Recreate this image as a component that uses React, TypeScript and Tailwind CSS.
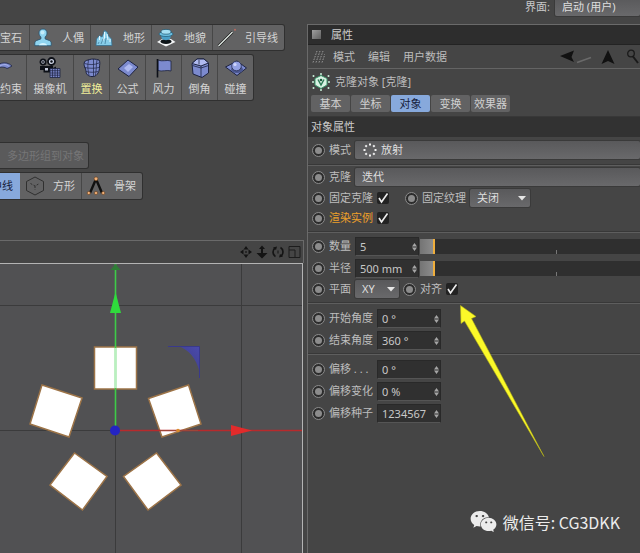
import { useState, type ReactNode } from "react";
import { FaWeixin } from "react-icons/fa";
import clsx from "clsx";

const ink = "#1d2340";
const fill = "#7c8ace";

function FigureIcon() {
  return (
    <svg width="18" height="20" viewBox="0 0 18 20" fill="#8fd4f0" stroke="#24506e" strokeWidth="0.8">
      <path d="M9 1c2.600 0 4 1.700 4 4 0 1.800-.8 3.100-1.900 3.900v2l4.700 1.800c1.400.7 1.700 2.700 1.300 5H.9c-.4-2.300-.1-4.300 1.300-5l4.700-1.800v-2C5.800 8.100 5 6.800 5 5c0-2.300 1.400-4 4-4z" />
      <path d="M5 17.300c1-3 7-3 8 0z" fill="#d4f4ff" stroke="none" />
      <circle cx="8.500" cy="4.500" r="2" fill="#c3ebfa" stroke="none" />
    </svg>
  );
}

function TerrainIcon() {
  return (
    <svg width="18" height="20" viewBox="0 0 18 20">
      <path d="M1 17.500 1.500 11l3-3.500L7 9l2.500-6.500L12 4l2 4.500 2.500 2.500.5 6.500z" fill="#86cdea" stroke="#356f8f" strokeWidth="0.8" />
      <path d="M4.500 8v4M9.500 4v6l-2 3M12 6l1 6M15 11v3" stroke="#e4f7ff" fill="none" />
      <path d="m6 16 2-5M10 16l1-6M3 16l1-2" stroke="#437f9e" fill="none" strokeWidth="0.8" />
    </svg>
  );
}

function LandscapeIcon() {
  return (
    <svg width="20" height="20" viewBox="0 0 20 20">
      <path d="M1 14 6 11h9l4.500 3L10 18.500z" fill="#f3f5f6" />
      <ellipse cx="10" cy="13.500" rx="5.500" ry="2.600" fill="#0d1418" />
      <path d="M4.500 6h11l-1.500 5c-2 1.500-6 1.500-8 0z" fill="#4b9fc7" />
      <ellipse cx="10" cy="6" rx="7" ry="2.500" fill="#6dbfe0" stroke="#1f5773" strokeWidth="0.7" />
      <ellipse cx="10" cy="3.800" rx="5" ry="2.400" fill="#a5dff3" stroke="#1f5773" strokeWidth="0.7" />
    </svg>
  );
}

function GuideIcon() {
  return (
    <svg width="20" height="20" viewBox="0 0 20 20">
      <path d="m1.500 18 14-14" stroke="#1c1c1c" strokeWidth="2.600" />
      <path d="m1.500 18 14-14" stroke="#e4ece8" strokeWidth="1.200" />
      <circle cx="18" cy="1.800" r="1" fill="#b96a5f" />
    </svg>
  );
}

function ConstraintIcon() {
  return (
    <svg width="22" height="22" viewBox="0 0 22 22">
      <path d="M-8 14c4-8 14-11 20-5-2 1-3 2-5 2.500C4 9-4 10-8 14z" fill={fill} stroke={ink} strokeWidth="0.8" />
      <path d="M0 9c3-2 7-2 9 .5" stroke="#aab5ee" fill="none" />
    </svg>
  );
}

function CameraIcon() {
  return (
    <svg width="24" height="22" viewBox="0 0 24 22">
      <g fill="#c9cfe0" stroke="#0d1017" strokeWidth="1.800">
        <circle cx="5" cy="5" r="2.600" />
        <circle cx="13.500" cy="4.500" r="3.500" />
      </g>
      <circle cx="5" cy="5" r="0.900" fill="#0d1017" />
      <circle cx="13.500" cy="4.500" r="1.200" fill="#0d1017" />
      <path d="M2 9h13v6.500H5.500V13H2zM15 11l3-1.500v4L15 12.500z" fill="#0d1017" />
      <path d="M7 11h3v2.500H7z" fill="#c5cadb" />
      <path d="M12 11.500h10v9H12z" fill="#7a86c8" stroke={ink} strokeWidth="0.800" />
      <path d="M14.500 11.500v9M17 11.500v9M19.500 11.500v9M12 13.700h10M12 16h10M12 18.200h10" stroke={ink} strokeWidth="0.700" />
    </svg>
  );
}

function DisplaceIcon() {
  return (
    <svg width="22" height="22" viewBox="0 0 22 22" stroke={ink}>
      <path d="M3.500 5c1-2 3-1.500 5-2.500 3-.8 6-.5 9.500.5 1.500 2 .5 5 .5 7 0 4-2 9-6 9.500S5 18 5 14.500 2 9 3.500 5z" fill={fill} />
      <path d="M8 2.500c-2 5-1 11 0 16M12.500 2v17.500M16 3c-1 5-.5 10-1.500 15M3.500 6.500c5 1.500 10 1.500 14.500-.5M3.500 10.500c5 1 10 1 14.500 0M5 14.500c4 1 8 1 12 0" fill="none" strokeWidth="0.700" />
    </svg>
  );
}

function FormulaIcon() {
  return (
    <svg width="22" height="22" viewBox="0 0 22 22">
      <path d="M1 12 11 3l10 7-9 9.500z" fill={fill} stroke={ink} />
      <path d="m7 11 5-4 4 3-5 5z" fill="#aeb9f0" />
    </svg>
  );
}

function WindIcon() {
  return (
    <svg width="22" height="22" viewBox="0 0 22 22">
      <path d="M5 3c4 2 9-.5 13 1v10c-4-1.500-9 1-13-.5z" fill={fill} stroke={ink} strokeWidth="0.800" />
      <path d="M4.500 2v18.500" stroke="#0d1017" strokeWidth="1.600" />
    </svg>
  );
}

function BevelIcon() {
  return (
    <svg width="22" height="22" viewBox="0 0 22 22" stroke={ink} strokeLinejoin="round">
      <path d="M3 6.500 8 2h7l4.500 4V16L13 20.500 4 17z" fill={fill} />
      <path d="M3 6.500 8 2h7l4.500 4L12 9z" fill="#b0baf0" />
      <path d="M12 9v11M3.500 8.500 12 11l7.500-2.500M10 3v4.500" fill="none" strokeWidth="0.800" />
    </svg>
  );
}

function CollideIcon() {
  return (
    <svg width="22" height="22" viewBox="0 0 22 22">
      <path d="M.5 10 12 4l9.500 7L12 18.500z" fill={fill} stroke={ink} />
      <ellipse cx="12" cy="12.500" rx="6" ry="3.500" fill="#4a568f" />
      <circle cx="11.500" cy="9" r="4.800" fill="#93a1e4" stroke={ink} strokeWidth="0.700" />
      <circle cx="10" cy="7.500" r="1.600" fill="#cfd6fb" />
    </svg>
  );
}

function HexIcon() {
  return (
    <svg width="20" height="20" viewBox="0 0 20 20" fill="none" stroke="#303030">
      <path d="m10 1 8.500 4.500v9L10 19l-8.500-4.500v-9z" />
      <path d="m5.500 7.500 4.500 2.500 4.500-2.500M10 10v4" strokeDasharray="2 1.500" />
    </svg>
  );
}

function BoneIcon() {
  return (
    <svg width="20" height="20" viewBox="0 0 20 20">
      <path d="M10 3 4 17M10 3l6 14" stroke="#101010" strokeWidth="2.400" />
      <g fill="#f0b078" stroke="#6b3f1c" strokeWidth="0.600">
        <circle cx="10" cy="2.800" r="1.900" />
        <circle cx="2.800" cy="17" r="1.600" />
        <circle cx="10" cy="17" r="1.600" />
        <circle cx="17.200" cy="17" r="1.600" />
      </g>
    </svg>
  );
}

function ClonerIcon() {
  return (
    <svg width="18" height="18" viewBox="0 0 18 18">
      <path d="m9 2.500 6 3v6.500L9 15.500 3 12V5.500z" fill="#d9f3e4" stroke="#3c9a6c" />
      <path d="M6 6.500 9 12l3-5.500" fill="none" stroke="#2c7a55" strokeWidth="1.500" />
      <circle cx="9" cy="7" r="1.300" fill="#1f5a3e" />
      <g fill="#c9f0da">
        <circle cx="9" cy="1" r="1" />
        <circle cx="16.500" cy="3" r="1" />
        <circle cx="1.500" cy="3" r="1" />
        <circle cx="1" cy="9" r="1" />
        <circle cx="17" cy="9" r="1" />
        <circle cx="1.500" cy="15" r="1" />
        <circle cx="16.500" cy="15" r="1" />
        <circle cx="9" cy="17" r="1" />
      </g>
    </svg>
  );
}

function RadialIcon() {
  return (
    <svg width="14" height="14" viewBox="0 0 14 14" fill="#f2f2f2">
      {[0, 45, 90, 135, 180, 225, 270, 315].map((angle) => (
        <rect key={angle} x="6" y="0.500" width="2" height="2" transform={`rotate(${angle} 7 7)`} />
      ))}
    </svg>
  );
}

function ViewportIcons() {
  return (
    <svg width="62" height="14" viewBox="0 0 62 14" fill="#141414">
      <path d="m7 1 2.500 3.500h-5zM7 13l2.500-3.500h-5zM1 7l3.500-2.500v5zM13 7 9.500 4.500v5zM6.200 6.200h1.600v1.600H6.200z" />
      <path d="m23 .5 3 3.500h-2v4h4.500L23 13.500 17.500 8H22V4h-2z" />
      <path d="M36.500 11.500a5.200 5.200 0 0 1-.5-8.500M41.500 2.500a5.200 5.200 0 0 1 .5 8.500" fill="none" stroke="#141414" strokeWidth="1.600" />
      <path d="m34 2.500 4-1-1 3.500zM44 11.500l-4 1 1-3.500zM38.500 5.500h1v3h-1z" />
      <path d="M50 1.500h11v11H50zM50 5h6v7.500" fill="none" stroke="#1d1d1d" />
    </svg>
  );
}

function Scene() {
  return (
    <svg className="absolute left-0 top-0" width="302" height="289" viewBox="0 264 302 289">
      <defs>
        <linearGradient id="plane" x1="1" y1="0" x2="0.300" y2="0.800">
          <stop offset="0" stopColor="#4a4aae" />
          <stop offset="1" stopColor="#40408a" />
        </linearGradient>
      </defs>
      <path d="M0 305.500h302M0 430.500h302M115.500 264v289M241.500 264v289" stroke="#3b3b3c" />
      <path d="M178 346h21v24c-3-11-9-20-21-24z" fill="url(#plane)" />
      <path d="M168 346.500h31.500V378" fill="none" stroke="#39398c" />
      <g fill="#ffffff" stroke="#9d7448" strokeWidth="1.500">
        <path d="M94.500 347h42v42h-42z" />
        <path d="m42 385 40 13-13 39-39-13z" />
        <path d="m148.500 398.500 40-13.500 12.500 39-39 13z" />
        <path d="m74.500 453 32.500 23.500-24.500 33.500-32.500-25z" />
        <path d="m156.500 453 24.500 32-33 25-24.500-33.500z" />
      </g>
      <path d="M115 430.500h187" stroke="#b82a2c" strokeWidth="1.400" />
      <path d="M160 430.500h38" stroke="#a04538" />
      <circle cx="178" cy="430.500" r="1.800" fill="#d98b2c" />
      <path d="M231 425v11l21-5.500z" fill="#e22b2b" />
      <path d="M115.500 264v166" stroke="#3ecb48" strokeWidth="1.600" />
      <path d="M115.500 348v40" stroke="#b9f0c0" strokeWidth="1.600" />
      <path d="m115.500 264-5 6h10z" fill="#2f7d36" />
      <path d="m115.500 292-5.500 21h11z" fill="#2fdc3c" />
      <circle cx="115" cy="430.500" r="5" fill="#2424c4" />
    </svg>
  );
}

const objectTools = [
  { label: "人偶", icon: <FigureIcon /> },
  { label: "地形", icon: <TerrainIcon /> },
  { label: "地貌", icon: <LandscapeIcon /> },
  { label: "引导线", icon: <GuideIcon /> },
];

const deformers = [
  { label: "置换", icon: <DisplaceIcon />, active: true },
  { label: "公式", icon: <FormulaIcon /> },
  { label: "风力", icon: <WindIcon /> },
  { label: "倒角", icon: <BevelIcon /> },
  { label: "碰撞", icon: <CollideIcon /> },
];

const tabs = ["基本", "坐标", "对象", "变换", "效果器"];

function Dot() {
  return (
    <span className="flex size-[13px] shrink-0 items-center justify-center rounded-full border border-[#8c8c8c] bg-[#2c2c2c]">
      <span className="size-[7px] rounded-full bg-[#8c8c8c]" />
    </span>
  );
}

function Row({ className = "h-[22px]", children }: { className?: string; children: ReactNode }) {
  return <div className={clsx("flex items-center gap-1", className)}>{children}</div>;
}

function Group({ className, children }: { className?: string; children: ReactNode }) {
  return <div className={clsx("border-b border-[#5e5e5e] pl-1 shadow-[0_-1px_0_#383838_inset]", className)}>{children}</div>;
}

function Select({ id, value, className, icon, arrow }: { id: string; value: string; className?: string; icon?: ReactNode; arrow?: boolean }) {
  return (
    <div className={clsx("relative h-[18px]", className)}>
      <select
        id={id}
        defaultValue={value}
        className={clsx(
          "block h-full w-full appearance-none rounded-xs bg-linear-to-b from-[#59595b] to-[#69696b] text-[11px] leading-4 text-[#dedede] shadow-[0_0_0_1px_#3a3a3a] outline-none",
          icon ? "pl-[26px]" : "pl-[7px]"
        )}
      >
        <option>{value}</option>
      </select>
      {icon && <span className="pointer-events-none absolute left-2 top-[2px]">{icon}</span>}
      {arrow && (
        <svg className="pointer-events-none absolute right-1 top-[7px]" width="8" height="5" viewBox="0 0 8 5">
          <path d="M0 0h8L4 4.500z" fill="#e6e6e6" />
        </svg>
      )}
    </div>
  );
}

function NumberField({ id, value }: { id: string; value: string }) {
  return (
    <div className="relative h-[19px] w-16 shrink-0">
      <input
        id={id}
        type="text"
        defaultValue={value}
        className="block h-full w-full border border-[#292929] border-b-[#555555] bg-[#303030] pl-1 text-[11px] leading-4 text-[#c8c8c8] outline-none"
      />
      <svg className="pointer-events-none absolute right-[2px] top-[6px]" width="5" height="8" viewBox="0 0 5 8" fill="#a5a5a5">
        <path d="M0 3.500 2.500 0 5 3.500zM0 4.500h5L2.500 8z" />
      </svg>
    </div>
  );
}

function Slider({ label }: { label: string }) {
  return (
    <div className="relative -ml-[3px] h-[15px] min-w-0 flex-1 bg-[#2f2f2f]">
      <input
        type="range"
        aria-label={label}
        min={0}
        max={100}
        defaultValue={6}
        className="block h-full w-full appearance-none bg-[linear-gradient(90deg,#747474,#8d8d8d)] bg-[length:14px_100%] bg-no-repeat outline-none [&::-webkit-slider-thumb]:h-[15px] [&::-webkit-slider-thumb]:w-[2px] [&::-webkit-slider-thumb]:appearance-none [&::-webkit-slider-thumb]:bg-[#efae3c]"
      />
      <span className="absolute bottom-0 left-[62%] h-1 w-px bg-[#777777]" />
    </div>
  );
}

function Check({ id }: { id: string }) {
  return (
    <span className="relative size-3 shrink-0">
      <input id={id} type="checkbox" defaultChecked className="peer block size-3 appearance-none rounded-xs bg-[#222222]" />
      <svg className="pointer-events-none absolute left-0 top-0 hidden overflow-visible peer-checked:block" width="12" height="12" viewBox="0 0 12 12">
        <path d="m2 6 2.500 4L10.500 1.500" fill="none" stroke="#ececec" strokeWidth="1.600" />
      </svg>
    </span>
  );
}

function Toolbars() {
  return (
    <div className="flex h-[240px] flex-col items-start pt-[25px] text-[#d4d4d4]">
      <div className="flex h-[25px] rounded-r-xs bg-[#626263] shadow-[0_0_0_1px_#303030]">
        <button className="w-[29px] text-left">宝石</button>
        {objectTools.map((tool) => (
          <button key={tool.label} className="flex items-center border-l border-[#474747] pl-1 pr-[6px]">
            <span className="flex w-[28px]">{tool.icon}</span>
            {tool.label}
          </button>
        ))}
      </div>

      <div className="mt-[5px] flex h-[45px] rounded-r-xs bg-[#626263] shadow-[0_0_0_1px_#303030]">
        <button className="flex w-[26px] flex-col items-start gap-[2px] pt-[2px]">
          <ConstraintIcon />
          约束
        </button>
        <button className="flex w-[47px] flex-col items-center gap-[2px] border-l border-[#474747] pt-[2px]">
          <CameraIcon />
          摄像机
        </button>
        {deformers.map((tool) => (
          <button
            key={tool.label}
            className={clsx(
              "flex w-[36px] flex-col items-center gap-[2px] border-l border-[#474747] pt-[2px]",
              tool.active && "text-[#f0ee9a]"
            )}
          >
            {tool.icon}
            {tool.label}
          </button>
        ))}
      </div>

      <button disabled className="mt-[43px] h-[25px] rounded-r-xs bg-[#5a5a5b] pl-[7px] pr-1 text-[#767677] shadow-[0_0_0_1px_#303030]">
        多边形组到对象
      </button>

      <div className="mt-[5px] flex h-[26px] rounded-r-xs bg-[#626263] shadow-[0_0_0_1px_#303030]">
        <button className="-ml-[9px] w-[29px] bg-[#87a9dc] text-left text-[#15203a]">中线</button>
        <button className="flex items-center pl-[5px] pr-[6px]">
          <span className="flex w-[28px]">
            <HexIcon />
          </span>
          方形
        </button>
        <button className="flex items-center border-l border-[#474747] pl-1 pr-[6px]">
          <span className="flex w-[28px]">
            <BoneIcon />
          </span>
          骨架
        </button>
      </div>
    </div>
  );
}

function Attributes() {
  const [tab, setTab] = useState("对象");

  return (
    <section className="flex-1 border-l border-t border-[#6a6a6a] text-[#bdbdbd]">
      <h2 className="flex h-5 items-center gap-[10px] border-b border-[#232323] bg-[#2d2d2d] pl-1 text-[#cccccc]">
        <span className="size-[9px] bg-linear-to-br from-[#a0a0a0] to-[#606060]" />
        属性
      </h2>

      <nav className="flex h-6 items-center border-b border-[#646464] pl-1">
        <svg width="13" height="12" viewBox="0 0 13 12">
          <path d="M1 11.500 5 0M4 11.500 8 0M7 11.500 11 0M10 11.500 13 3" stroke="#9a9a9a" strokeDasharray="1.500 1.200" />
        </svg>
        <button className="ml-2">模式</button>
        <button className="ml-[13px]">编辑</button>
        <button className="ml-[13px]">用户数据</button>
        <svg className="ml-auto" width="80" height="16" viewBox="0 0 80 16">
          <path d="M0 7 14 1.500 11.500 8l2.500 5z" fill="#111111" />
          <path d="m17 13.500 14-5" stroke="#6a6a6a" strokeWidth="1.500" />
          <path d="m48 1 6.500 14-6.500-3-6.500 3z" fill="#111111" />
          <circle cx="71" cy="4.500" r="3.300" fill="none" stroke="#1a1a1a" strokeWidth="1.300" />
          <path d="m73 7.500 5 6.500" stroke="#1a1a1a" strokeWidth="2" />
        </svg>
      </nav>

      <h3 className="flex h-[26px] items-center gap-[5px] pl-1">
        <ClonerIcon />
        克隆对象 [克隆]
      </h3>

      <div role="tablist" className="flex h-[22px] gap-px border-b border-[#383838] pb-1 pl-[3px]">
        {tabs.map((name) => (
          <button
            key={name}
            role="tab"
            aria-selected={tab === name}
            onClick={() => setTab(name)}
            className={clsx(
              "w-[39px] rounded-xs",
              tab === name ? "bg-[#87a9dc] text-[#15203a]" : "bg-[#626263] text-[#d0d0d0]"
            )}
          >
            {name}
          </button>
        ))}
      </div>

      <h3 className="h-5 bg-[#323232] pl-[3px] leading-5 text-[#cccccc]">对象属性</h3>

      <Group className="pb-[2px]">
        <Row className="h-[26px]">
          <Dot />
          <label htmlFor="mode" className="w-[22px]">模式</label>
          <Select id="mode" value="放射" className="flex-1" icon={<RadialIcon />} />
        </Row>
      </Group>

      <Group className="pb-1">
        <Row>
          <Dot />
          <label htmlFor="clones" className="w-[22px]">克隆</label>
          <Select id="clones" value="迭代" className="flex-1" />
        </Row>
        <Row className="h-5">
          <Dot />
          <label htmlFor="fixclone">固定克隆</label>
          <Check id="fixclone" />
          <span className="w-2" />
          <Dot />
          <label htmlFor="fixtexture">固定纹理</label>
          <Select id="fixtexture" value="关闭" className="w-[60px]" arrow />
        </Row>
        <Row className="h-5">
          <Dot />
          <label htmlFor="instances" className="text-[#eda02a]">渲染实例</label>
          <Check id="instances" />
        </Row>
      </Group>

      <Group className="pb-1 pt-[2px]">
        <Row>
          <Dot />
          <label htmlFor="count" className="w-[22px]">数量</label>
          <NumberField id="count" value="5" />
          <Slider label="数量" />
        </Row>
        <Row>
          <Dot />
          <label htmlFor="radius" className="w-[22px]">半径</label>
          <NumberField id="radius" value="500 mm" />
          <Slider label="半径" />
        </Row>
        <Row className="h-5">
          <Dot />
          <label htmlFor="plane-axis" className="w-[22px]">平面</label>
          <Select id="plane-axis" value="XY" className="w-11" arrow />
          <Dot />
          <label htmlFor="align">对齐</label>
          <Check id="align" />
        </Row>
      </Group>

      <Group className="pb-[3px] pt-[3px]">
        <Row>
          <Dot />
          <label htmlFor="start" className="w-11">开始角度</label>
          <NumberField id="start" value="0 °" />
        </Row>
        <Row>
          <Dot />
          <label htmlFor="end" className="w-11">结束角度</label>
          <NumberField id="end" value="360 °" />
        </Row>
      </Group>

      <div className="pl-1 pt-[3px]">
        <Row>
          <Dot />
          <label htmlFor="offset" className="w-11 whitespace-nowrap">偏移 . . .</label>
          <NumberField id="offset" value="0 °" />
        </Row>
        <Row>
          <Dot />
          <label htmlFor="variation" className="w-11">偏移变化</label>
          <NumberField id="variation" value="0 %" />
        </Row>
        <Row>
          <Dot />
          <label htmlFor="seed" className="w-11">偏移种子</label>
          <NumberField id="seed" value="1234567" />
        </Row>
      </div>
    </section>
  );
}

export default function App() {
  return (
    <div className="relative flex min-h-screen overflow-hidden whitespace-nowrap bg-[#454545] font-['Noto_Sans','Noto_Sans_CJK_SC',sans-serif] text-[11px] leading-4">
      <div className="flex w-[304px] shrink-0 flex-col">
        <Toolbars />
        <div className="flex h-[23px] items-center justify-end border-r border-t border-[#6a6a6a] pr-[2px]">
          <ViewportIcons />
        </div>
        <div className="relative mr-px flex-1 overflow-hidden border-r border-t border-[#b4b4b4] bg-[#515153]">
          <Scene />
        </div>
      </div>

      <main className="ml-[3px] flex min-w-0 flex-1 flex-col">
        <div className="flex h-6 items-start justify-end gap-[5px] text-[#c8c8c8]">
          <label htmlFor="layout" className="leading-[14px]">界面:</label>
          <Select id="layout" value="启动 (用户)" className="-mt-[2px] w-[85px]" />
        </div>
        <Attributes />
      </main>

      {/* pointer to the align option */}
      <svg className="pointer-events-none absolute left-[455px] top-[300px]" width="95" height="160" viewBox="455 300 95 160">
        <path d="m460.500 305.500 15.500 11-4.500 2 72.500 138-79.500-135.500-3.500 2.500z" fill="#fbf929" stroke="#b5b31a" strokeWidth="0.600" />
      </svg>

      <div className="absolute bottom-[18px] right-5 flex items-center gap-[6px] font-['Noto_Sans_CJK_SC',sans-serif] text-base leading-6 text-[#ececec]">
        <FaWeixin size={27} />
        微信号: CG3DKK
      </div>
    </div>
  );
}
